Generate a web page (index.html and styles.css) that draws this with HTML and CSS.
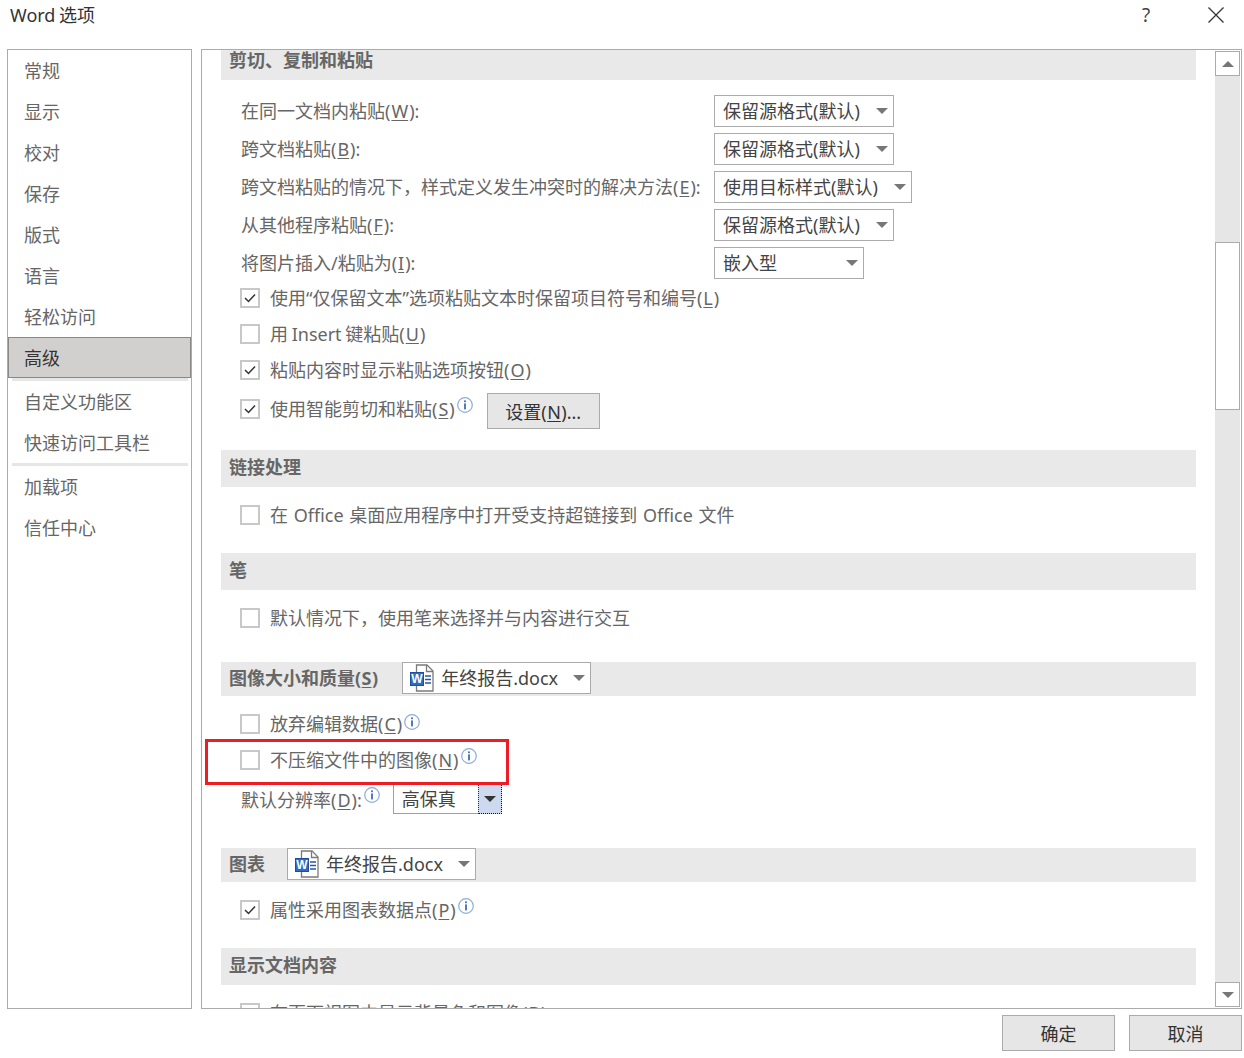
FILE: index.html
```html
<!DOCTYPE html>
<html lang="zh-CN">
<head>
<meta charset="utf-8">
<title>Word 选项</title>
<link rel="stylesheet" href="styles.css">
</head>
<body>
<svg class="defs" width="0" height="0" aria-hidden="true">
  <defs>
    <symbol id="info" viewBox="0 0 16 16">
      <circle cx="8" cy="8" r="7.3" fill="#fff" stroke="#8fabd8" stroke-width="1.2"/>
      <rect x="7.1" y="3.4" width="1.8" height="1.8" fill="#3f6db5"/>
      <rect x="7.1" y="6.4" width="1.8" height="6" fill="#3f6db5"/>
    </symbol>
    <symbol id="doc" viewBox="0 0 24 28">
      <path d="M6.5 1H17L23 7V27H6.5Z" fill="#fff" stroke="#7a7a7a" stroke-width="1.3"/>
      <path d="M16.5 1V7.5H23" fill="none" stroke="#7a7a7a" stroke-width="1.3"/>
      <path d="M15 12H21M15 15.5H21M15 19H21" stroke="#2b579a" stroke-width="1.4"/>
      <rect x="0.5" y="8.5" width="13" height="13" fill="#2b6cc4" stroke="#1d4f9c"/>
      <text x="7" y="19" text-anchor="middle" class="doc-w">W</text>
    </symbol>
  </defs>
</svg>
<div class="dialog">
  <header class="titlebar">
    <span class="title">Word 选项</span>
    <div class="title-actions">
      <span class="help">?</span>
      <svg class="close" width="18" height="18" viewBox="0 0 18 18"><path d="M1.5 1.5L16.5 16.5M16.5 1.5L1.5 16.5" stroke="#333" stroke-width="1.3" fill="none"/></svg>
    </div>
  </header>
  <div class="main">
    <nav class="sidebar">
      <div class="nav-item">常规</div>
      <div class="nav-item">显示</div>
      <div class="nav-item">校对</div>
      <div class="nav-item">保存</div>
      <div class="nav-item">版式</div>
      <div class="nav-item">语言</div>
      <div class="nav-item">轻松访问</div>
      <div class="nav-item nav-active">高级</div>
      <div class="nav-sep"></div>
      <div class="nav-item">自定义功能区</div>
      <div class="nav-item">快速访问工具栏</div>
      <div class="nav-sep"></div>
      <div class="nav-item">加载项</div>
      <div class="nav-item">信任中心</div>
    </nav>
    <section class="panel">
      <div class="content">
        <div class="sec-head sec-first">剪切、复制和粘贴</div>
        <div class="sel-row sel-row-first"><span class="sel-label">在同一文档内粘贴(<u>W</u>):</span><div class="select w180"><span>保留源格式(默认)</span><i class="caret"></i></div></div>
        <div class="sel-row"><span class="sel-label">跨文档粘贴(<u>B</u>):</span><div class="select w180"><span>保留源格式(默认)</span><i class="caret"></i></div></div>
        <div class="sel-row"><span class="sel-label">跨文档粘贴的情况下，样式定义发生冲突时的解决方法(<u>E</u>):</span><div class="select w198"><span>使用目标样式(默认)</span><i class="caret"></i></div></div>
        <div class="sel-row"><span class="sel-label">从其他程序粘贴(<u>F</u>):</span><div class="select w180"><span>保留源格式(默认)</span><i class="caret"></i></div></div>
        <div class="sel-row"><span class="sel-label">将图片插入/粘贴为(<u>I</u>):</span><div class="select w150"><span>嵌入型</span><i class="caret"></i></div></div>
        <div class="check-row mt1"><span class="box"><svg class="tick" viewBox="0 0 12 10"><path d="M1 5L4.5 8.5L11 1.5" fill="none" stroke="#333" stroke-width="1.5"/></svg></span><span>使用“仅保留文本”选项粘贴文本时保留项目符号和编号(<u>L</u>)</span></div>
        <div class="check-row"><span class="box"></span><span class="ws-tight">用 Insert 键粘贴(<u>U</u>)</span></div>
        <div class="check-row"><span class="box"><svg class="tick" viewBox="0 0 12 10"><path d="M1 5L4.5 8.5L11 1.5" fill="none" stroke="#333" stroke-width="1.5"/></svg></span><span>粘贴内容时显示粘贴选项按钮(<u>O</u>)</span></div>
        <div class="check-row row-gap3"><span class="box"><svg class="tick" viewBox="0 0 12 10"><path d="M1 5L4.5 8.5L11 1.5" fill="none" stroke="#333" stroke-width="1.5"/></svg></span><span>使用智能剪切和粘贴(<u>S</u>)</span><svg class="info"><use href="#info"/></svg><button class="btn btn-settings">设置(<u>N</u>)...</button></div>

        <div class="sec-head sec-37 mt23">链接处理</div>
        <div class="check-row mt10"><span class="box"></span><span class="ws-wide">在 Office 桌面应用程序中打开受支持超链接到 Office 文件</span></div>

        <div class="sec-head sec-37 mt20">笔</div>
        <div class="check-row mt10"><span class="box"></span><span>默认情况下，使用笔来选择并与内容进行交互</span></div>

        <div class="sec-head sec-34 mt26"><span>图像大小和质量(<u>S</u>)</span><div class="select doc-select dm24"><svg class="doc"><use href="#doc"/></svg><span>年终报告.docx</span><i class="caret"></i></div></div>
        <div class="check-row mt10"><span class="box"></span><span>放弃编辑数据(<u>C</u>)</span><svg class="info info-low"><use href="#info"/></svg></div>
        <div class="check-row highlight-row"><span class="box"></span><span>不压缩文件中的图像(<u>N</u>)</span><svg class="info"><use href="#info"/></svg><div class="red-box"></div></div>
        <div class="res-row"><span>默认分辨率(<u>D</u>):</span><svg class="info"><use href="#info"/></svg><div class="focus-select"><span class="focus-text">高保真</span><span class="focus-arrow"><i class="caret caret-dark"></i></span></div></div>

        <div class="sec-head sec-34 mt31"><span>图表</span><div class="select doc-select dm22"><svg class="doc"><use href="#doc"/></svg><span>年终报告.docx</span><i class="caret"></i></div></div>
        <div class="check-row mt10"><span class="box"><svg class="tick" viewBox="0 0 12 10"><path d="M1 5L4.5 8.5L11 1.5" fill="none" stroke="#333" stroke-width="1.5"/></svg></span><span>属性采用图表数据点(<u>P</u>)</span><svg class="info"><use href="#info"/></svg></div>

        <div class="sec-head sec-37 mt20">显示文档内容</div>
        <div class="check-row mt10"><span class="box"></span><span>在页面视图中显示背景色和图像(<u>B</u>)</span></div>
      </div>
      <aside class="scrollbar">
        <div class="sb-btn"><i class="sb-up"></i></div>
        <div class="sb-thumb"></div>
        <div class="sb-btn sb-end"><i class="sb-down"></i></div>
      </aside>
    </section>
  </div>
  <footer class="footer">
    <button class="btn btn-foot">确定</button>
    <button class="btn btn-foot">取消</button>
  </footer>
</div>
</body>
</html>
```
FILE: styles.css
```css
* { box-sizing: border-box; }
html, body { margin: 0; padding: 0; background: #fff; }
body {
  width: 1244px;
  height: 1058px;
  overflow: hidden;
  font-family: "Noto Sans", "Noto Sans CJK SC", sans-serif;
  font-size: 18px;
  color: #666;
}
.defs { display: block; height: 0; }
.doc-w { font: bold 12px "Liberation Sans", sans-serif; fill: #fff; }
u { text-underline-offset: 2px; margin: 0 1px; }
.btn u, .sec-head u { margin: 0 0.5px; }
.ws-wide { word-spacing: 1px; }
.ws-tight { word-spacing: -1px; }

.dialog { display: flex; flex-direction: column; width: 1244px; height: 1058px; }

.titlebar {
  height: 49px;
  flex: none;
  display: flex;
  justify-content: space-between;
  padding: 4px 19px 0 10px;
}
.title { color: #333; line-height: 22px; word-spacing: -1px; }
.title-actions { display: flex; align-items: flex-start; gap: 55px; }
.help { color: #444; font-size: 19px; line-height: 22px; width: 12px; text-align: center; }
.close { display: block; margin-top: 2px; }

.main { height: 960px; flex: none; display: flex; gap: 9px; padding: 0 2px 0 7px; }

.sidebar {
  width: 185px;
  flex: none;
  border: 1px solid #ababab;
}
.nav-item {
  height: 41px;
  line-height: 43px;
  padding-left: 16px;
  color: #666;
}
.nav-active {
  background: #d2d0ce;
  border: 1px solid #8a8886;
  line-height: 41px;
  padding-left: 15px;
  color: #333;
}
.nav-sep { height: 3px; margin: 0 3px 0 4px; background: #e6e6e6; }

.panel {
  flex: 1;
  min-width: 0;
  border: 1px solid #ababab;
  display: flex;
  overflow: hidden;
}
.content {
  flex: 1;
  min-width: 0;
  padding: 0 19px;
  overflow: hidden;
  display: flex;
  flex-direction: column;
}
.content > * { flex: none; }

.sec-head {
  background: #e9e9e9;
  font-weight: 700;
  color: #666;
  padding-left: 8px;
  display: flex;
  align-items: center;
}
.sec-first { height: 30px; padding-bottom: 12px; }
.sec-37 { height: 37px; padding-bottom: 6px; }
.sec-34 { height: 34px; align-items: flex-start; line-height: 33px; }
.mt1 { margin-top: 1px; }
.mt10 { margin-top: 10px; }
.mt20 { margin-top: 20px; }
.mt23 { margin-top: 23px; }
.mt26 { margin-top: 26px; }
.mt31 { margin-top: 31px; }

.sel-row { height: 32px; margin-top: 6px; display: flex; align-items: center; padding-left: 20px; }
.sel-row-first { margin-top: 15px; }
.sel-label { width: 473px; flex: none; white-space: nowrap; margin-bottom: 2px; }

.select {
  height: 32px;
  background: #fff;
  border: 1px solid #ababab;
  display: flex;
  align-items: center;
  padding: 0 5px 0 8px;
  justify-content: space-between;
  color: #444;
  font-weight: 400;
  line-height: 30px;
}
.w180 { width: 180px; }
.w198 { width: 198px; }
.w150 { width: 150px; }
.caret {
  width: 0;
  height: 0;
  border-left: 6px solid transparent;
  border-right: 6px solid transparent;
  border-top: 6px solid #777;
}
.caret-dark { border-top-color: #333; }

.doc-select { width: 189px; justify-content: flex-start; padding-left: 7px; }
.doc-select .caret { margin-left: auto; }
.dm22 { margin-left: 22px; }
.dm24 { margin-left: 24px; }
.doc { width: 24px; height: 28px; margin-right: 7px; flex: none; }

.check-row {
  height: 36px;
  display: flex;
  align-items: center;
  padding-left: 19px;
  white-space: nowrap;
  position: relative;
}
.check-row > span:not(.box) { margin-bottom: 2px; }
.row-gap3 { margin-top: 3px; }
.box {
  width: 20px;
  height: 20px;
  flex: none;
  border: 2px solid #c8c8c8;
  background: #fff;
  margin-right: 10px;
  display: flex;
  align-items: center;
  justify-content: center;
}
.tick { width: 12px; height: 10px; display: block; }

.info { width: 16px; height: 16px; flex: none; margin: -8px 0 0 2px; }
.info-low { margin-top: -4px; }

.btn {
  font: inherit;
  color: #333;
  background: #e6e6e6;
  border: 1px solid #ababab;
  padding: 0;
}
.btn-settings { width: 113px; height: 36px; margin: 4px 0 0 14px; }

.highlight-row { z-index: 1; }
.red-box {
  position: absolute;
  left: -16px;
  top: -3px;
  width: 304px;
  height: 46px;
  border: 3px solid #ee1c25;
  pointer-events: none;
}

.res-row {
  height: 36px;
  margin-top: 3px;
  display: flex;
  align-items: center;
  padding-left: 20px;
  white-space: nowrap;
}
.focus-select {
  width: 109px;
  height: 30px;
  margin-left: 13px;
  display: flex;
  border: 0;
}
.focus-text {
  flex: 1;
  padding-left: 8px;
  color: #444;
  line-height: 28px;
  border: 1px solid #7fa6dc;
  border-right: 0;
}
.focus-arrow {
  width: 24px;
  flex: none;
  background: #ccd9ee;
  border-left: 1px dotted #333;
  border-right: 1px dotted #111;
  border-bottom: 1px dotted #111;
  display: flex;
  align-items: center;
  justify-content: center;
}

.scrollbar {
  width: 25px;
  flex: none;
  margin: 1px 1px 1px 0;
  background: #e6e6e6;
  display: flex;
  flex-direction: column;
}
.sb-btn {
  height: 25px;
  flex: none;
  background: #fff;
  border: 1px solid #ababab;
  display: flex;
  align-items: center;
  justify-content: center;
}
.sb-end { margin-top: auto; }
.sb-up { width: 0; height: 0; border: 6px solid transparent; border-top: 0; border-bottom: 6px solid #777; }
.sb-down { width: 0; height: 0; border: 6px solid transparent; border-bottom: 0; border-top: 6px solid #777; }
.sb-thumb { height: 168px; margin-top: 166px; background: #fff; border: 1px solid #ababab; flex: none; }

.footer {
  flex: 1;
  display: flex;
  justify-content: flex-end;
  gap: 14px;
  padding: 6px 2px 0 0;
  align-items: flex-start;
}
.btn-foot { width: 113px; height: 36px; }
```
